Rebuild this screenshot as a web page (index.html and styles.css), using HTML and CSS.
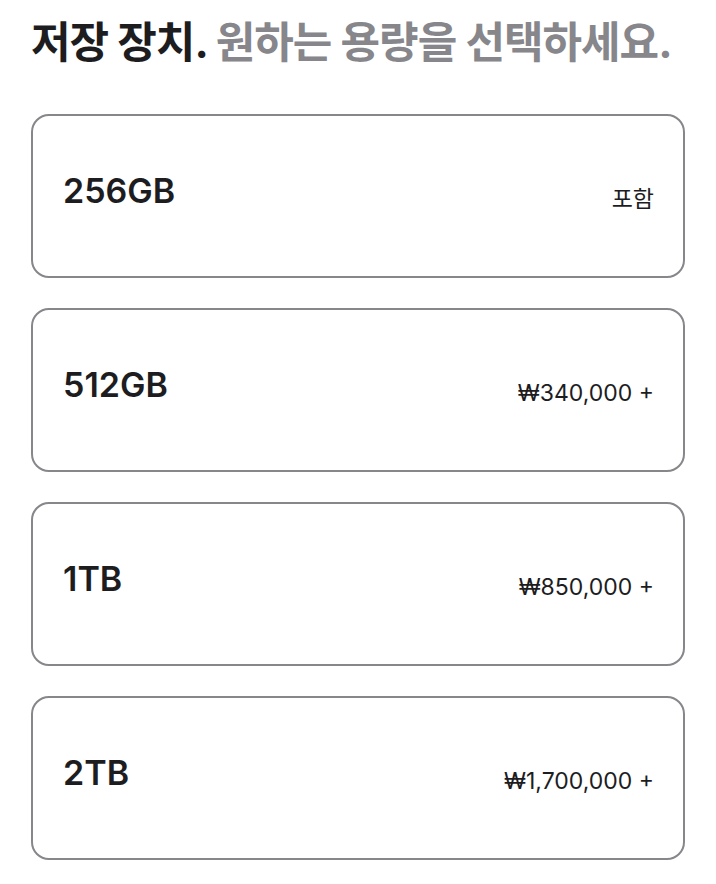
FILE: index.html
```html
<!DOCTYPE html>
<html lang="ko">
<head>
    <meta charset="UTF-8">
    <meta name="viewport" content="width=device-width, initial-scale=1.0">
    <title>저장 장치 선택</title>
    <link rel="stylesheet" href="styles.css">
</head>
<body>
    <h2 class="picker-title">저장 장치. <span class="muted">원하는 용량을 선택하세요.</span></h2>

    <div class="option-list">
        <label class="option">
            <span class="option-name">256GB</span>
            <span class="option-price">포함</span>
        </label>
        <label class="option">
            <span class="option-name">512GB</span>
            <span class="option-price">₩340,000 +</span>
        </label>
        <label class="option">
            <span class="option-name">1TB</span>
            <span class="option-price">₩850,000 +</span>
        </label>
        <label class="option">
            <span class="option-name">2TB</span>
            <span class="option-price">₩1,700,000 +</span>
        </label>
    </div>
</body>
</html>
```

FILE: styles.css
```css
body {
    margin: 0;
    padding: 0 31px;
    background: #fff;
    color: #1d1d1f;
    font-family: Inter, "Noto Sans CJK KR", sans-serif;
}
.picker-title {
    margin: 0;
    padding-top: 16px;
    font-size: 43px;
    font-weight: 700;
    line-height: 52px;
    letter-spacing: -1px;
    white-space: nowrap;
}
.muted {
    color: #86868b;
}
.option-list {
    display: flex;
    flex-direction: column;
    gap: 30px;
    margin-top: 46px;
}
.option {
    display: flex;
    justify-content: space-between;
    align-items: baseline;
    box-sizing: border-box;
    height: 164px;
    padding: 54px 29px 0 30px;
    border: 2px solid #86868b;
    border-radius: 18px;
}
.option-name {
    font-size: 34px;
    font-weight: 600;
    letter-spacing: 0;
}
.option-price {
    font-size: 23px;
    letter-spacing: 0;
    position: relative;
    top: 4px;
}
```
